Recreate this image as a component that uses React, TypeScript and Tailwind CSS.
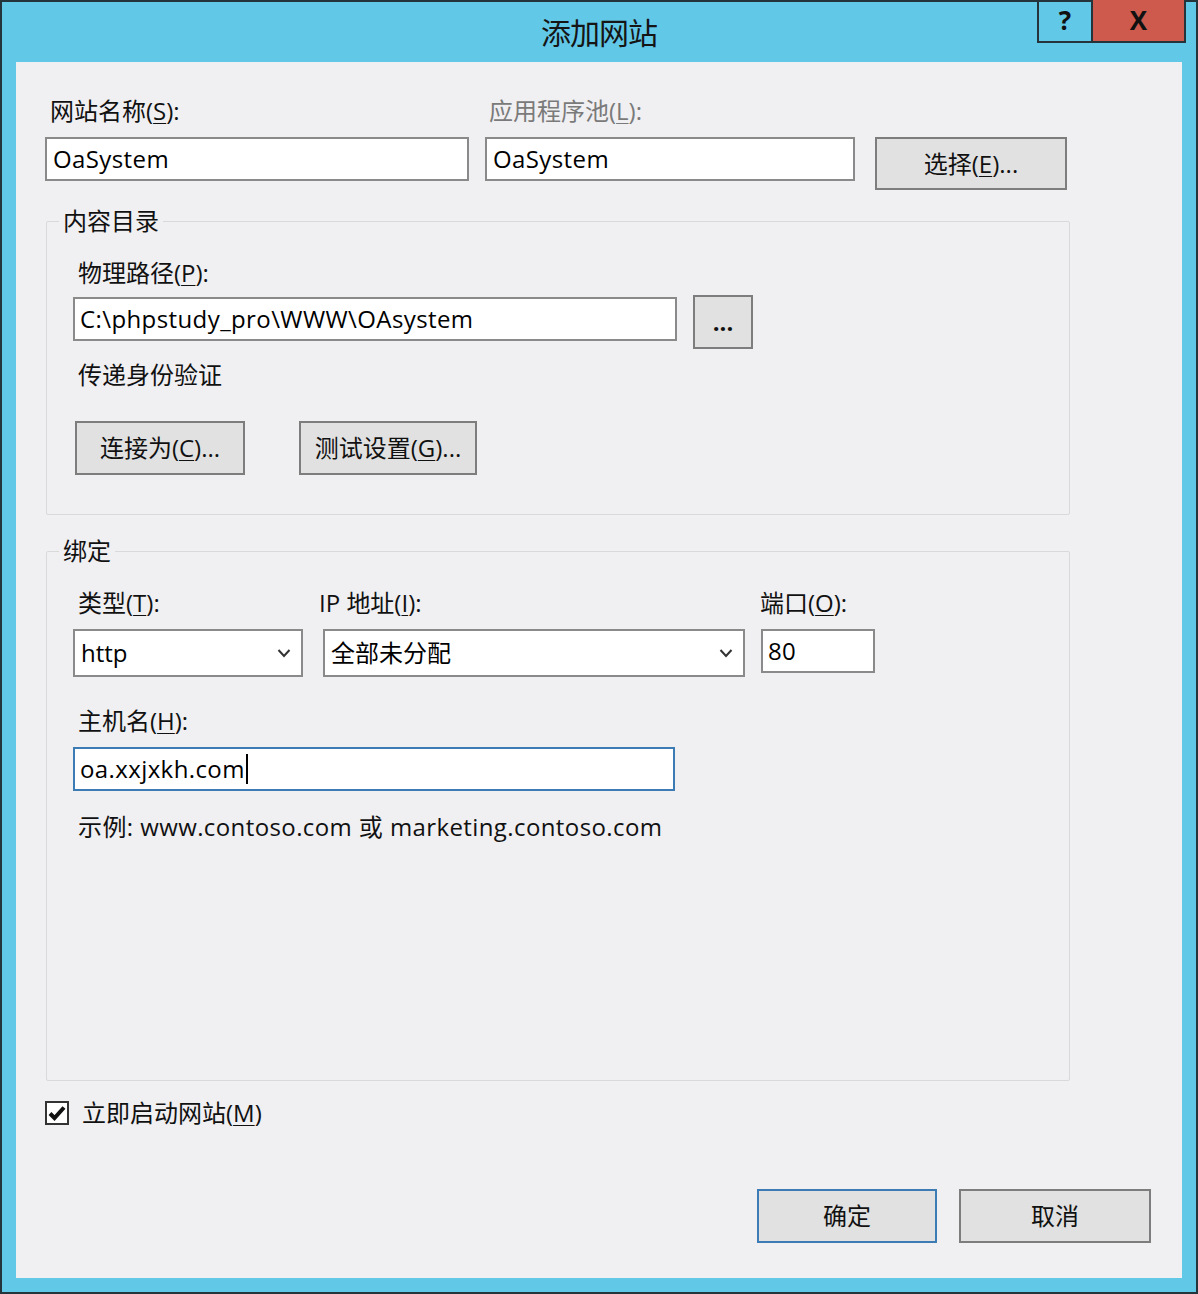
import React from 'react'

const font = {
  fontFamily: '"Open Sans", "Noto Sans CJK SC", sans-serif',
}

// 带下划线的助记键
function Key({ k }: { k: string }) {
  return <u className="underline underline-offset-[3px] decoration-1">{k}</u>
}

function Label({
  children,
  className = '',
}: {
  children: React.ReactNode
  className?: string
}) {
  return (
    <div className={`h-[32px] leading-[32px] text-[24px] text-[#111] whitespace-nowrap ${className}`}>
      {children}
    </div>
  )
}

function WinButton({
  children,
  className = '',
  primary = false,
}: {
  children: React.ReactNode
  className?: string
  primary?: boolean
}) {
  return (
    <button
      type="button"
      className={`flex items-center justify-center bg-[#e1e1e1] text-[24px] text-[#111] ${
        primary ? 'border-2 border-[#3d7bb5]' : 'border-2 border-[#7d7d7d]'
      } ${className}`}
    >
      {children}
    </button>
  )
}

function TextBox({
  value,
  className = '',
  focused = false,
}: {
  value: string
  className?: string
  focused?: boolean
}) {
  return (
    <div
      className={`flex items-center bg-white text-[24px] text-black whitespace-nowrap tracking-[0.4px] ${
        focused ? 'border-2 border-[#3d7bb5]' : 'border-2 border-[#8a8a8a]'
      } ${className}`}
    >
      <span>{value}</span>
      {focused && <span className="ml-[1px] w-[2px] h-[30px] bg-black" />}
    </div>
  )
}

function Select({ value, className = '' }: { value: string; className?: string }) {
  return (
    <div
      className={`flex items-center justify-between bg-white border-2 border-[#8a8a8a] text-[24px] text-black pl-[6px] pr-[10px] ${className}`}
    >
      <span>{value}</span>
      <svg width="14" height="10" viewBox="0 0 14 10">
        <polyline points="1.5,2 7,8 12.5,2" fill="none" stroke="#333" strokeWidth="2" />
      </svg>
    </div>
  )
}

export default function App() {
  return (
    <div
      className="w-[1198px] h-[1294px] border-2 border-[#25343b] bg-[#62c8e8] flex flex-col"
      style={font}
    >
      {/* 标题栏 */}
      <div className="relative h-[60px] flex items-center justify-center">
        <span className="text-[30px] text-[#151515] tracking-[-1px]">添加网站</span>
        <div className="absolute -top-[2px] right-[10px] flex h-[43px]">
          <div className="w-[56px] flex items-center justify-center border-2 border-t-0 border-[#25343b] text-[26px] font-bold text-[#111]">
            ?
          </div>
          <div className="w-[93px] flex items-center justify-center border-2 border-t-0 border-l-0 border-[#25343b] bg-[#cd5a4d] text-[26px] font-bold text-[#111]">
            X
          </div>
        </div>
      </div>

      {/* 客户区 */}
      <div className="flex-1 mx-[14px] mb-[14px] bg-[#f0eff1] px-[29px] pt-[33px]">
        <div className="flex items-start">
          <div className="w-[424px] flex flex-col">
            <Label className="pl-[5px]">
              网站名称(<Key k="S" />):
            </Label>
            <TextBox value="OaSystem" className="mt-[10px] h-[44px] pl-[6px]" />
          </div>
          <div className="ml-[16px] w-[370px] flex flex-col">
            <Label className="pl-[4px] !text-[#7a7a7a]">
              应用程序池(<Key k="L" />):
            </Label>
            <TextBox value="OaSystem" className="mt-[10px] h-[44px] pl-[6px]" />
          </div>
          <WinButton className="ml-[20px] mt-[42px] w-[192px] h-[53px]">
            选择(<Key k="E" />)...
          </WinButton>
        </div>

        {/* 内容目录 */}
        <fieldset className="ml-[1px] mt-[15px] w-[1024px] border border-[#d9d9d9] rounded-[2px]">
          <legend className="ml-[12px] px-[4px] h-[32px] leading-[32px] text-[24px] text-[#111]">
            内容目录
          </legend>
          <div className="pl-[26px] pt-[20px] pb-[39px]">
            <Label className="pl-[5px]">
              物理路径(<Key k="P" />):
            </Label>
            <div className="mt-[6px] flex items-start">
              <TextBox
                value="C:\phpstudy_pro\WWW\OAsystem"
                className="mt-[2px] w-[604px] h-[44px] pl-[5px]"
              />
              <WinButton className="ml-[16px] w-[60px] h-[54px] font-bold">...</WinButton>
            </div>
            <Label className="mt-[10px] pl-[5px]">传递身份验证</Label>
            <div className="mt-[30px] flex">
              <WinButton className="ml-[2px] w-[170px] h-[54px]">
                连接为(<Key k="C" />)...
              </WinButton>
              <WinButton className="ml-[54px] w-[178px] h-[54px]">
                测试设置(<Key k="G" />)...
              </WinButton>
            </div>
          </div>
        </fieldset>

        {/* 绑定 */}
        <fieldset className="ml-[1px] mt-[20px] w-[1024px] h-[546px] border border-[#d9d9d9] rounded-[2px]">
          <legend className="ml-[12px] px-[4px] h-[32px] leading-[32px] text-[24px] text-[#111]">
            绑定
          </legend>
          <div className="pl-[26px] pt-[20px]">
            <div className="flex items-start">
              <div className="w-[230px] flex flex-col">
                <Label className="pl-[5px]">
                  类型(<Key k="T" />):
                </Label>
                <Select value="http" className="mt-[10px] h-[48px]" />
              </div>
              <div className="ml-[20px] w-[422px] flex flex-col">
                <Label className="-ml-[4px]">
                  IP 地址(<Key k="I" />):
                </Label>
                <Select value="全部未分配" className="mt-[10px] h-[48px]" />
              </div>
              <div className="ml-[16px] w-[114px] flex flex-col">
                <Label className="-ml-[1px]">
                  端口(<Key k="O" />):
                </Label>
                <TextBox value="80" className="mt-[10px] h-[44px] pl-[5px]" />
              </div>
            </div>
            <Label className="mt-[28px] pl-[5px]">
              主机名(<Key k="H" />):
            </Label>
            <TextBox
              value="oa.xxjxkh.com"
              focused
              className="mt-[10px] w-[602px] h-[44px] pl-[5px]"
            />
            <Label className="mt-[20px] pl-[5px] tracking-[0.4px]">
              示例: www.contoso.com 或 marketing.contoso.com
            </Label>
          </div>
        </fieldset>

        <div className="mt-[16px] h-[32px] flex items-center">
          <div className="w-[24px] h-[24px] border-2 border-[#333] bg-white flex items-center justify-center">
            <svg width="18" height="16" viewBox="0 0 18 16">
              <path d="M2 8.5 L6.5 13 L16 2.5" fill="none" stroke="#111" strokeWidth="4" />
            </svg>
          </div>
          <span className="ml-[13px] text-[24px] text-[#111]">
            立即启动网站(<Key k="M" />)
          </span>
        </div>

        <div className="mt-[60px] mr-[2px] flex justify-end gap-[22px]">
          <WinButton primary className="w-[180px] h-[54px]">
            确定
          </WinButton>
          <WinButton className="w-[192px] h-[54px]">取消</WinButton>
        </div>
      </div>
    </div>
  )
}
